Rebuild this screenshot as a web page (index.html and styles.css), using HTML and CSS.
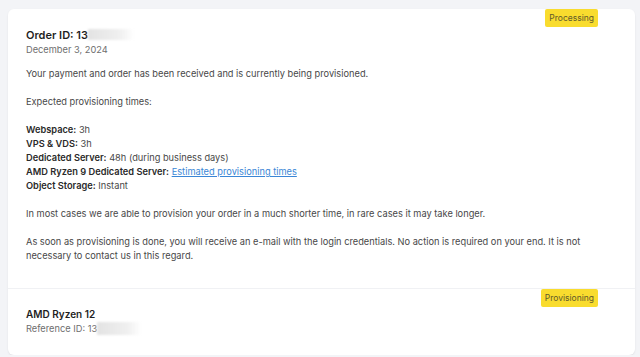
FILE: index.html
```html
<!DOCTYPE html>
<html lang="en">
<head>
<meta charset="utf-8">
<title>Order</title>
<link rel="stylesheet" href="styles.css">
</head>
<body>
<div class="card">
  <section class="section main">
    <span class="badge badge-top">Processing</span>
    <h2 class="title">Order ID: 13<span class="blur"></span></h2>
    <div class="date">December 3, 2024</div>
    <p>Your payment and order has been received and is currently being provisioned.</p>
    <p>Expected provisioning times:</p>
    <p>
      <b>Webspace:</b> 3h<br>
      <b>VPS &amp; VDS:</b> 3h<br>
      <b>Dedicated Server:</b> 48h (during business days)<br>
      <b>AMD Ryzen 9 Dedicated Server:</b> <a href="#">Estimated provisioning times</a><br>
      <b>Object Storage:</b> Instant
    </p>
    <p>In most cases we are able to provision your order in a much shorter time, in rare cases it may take longer.</p>
    <p>As soon as provisioning is done, you will receive an e-mail with the login credentials. No action is required on your end. It is not necessary to contact us in this regard.</p>
  </section>
  <section class="section item">
    <span class="badge badge-top">Provisioning</span>
    <h3 class="title">AMD Ryzen 12</h3>
    <div class="date">Reference ID: 13<span class="blur blur-sm"></span></div>
  </section>
</div>
</body>
</html>
```
FILE: styles.css
```css
* { box-sizing: border-box; }
html, body { margin: 0; padding: 0; }
body {
  background: #f3f4f7;
  font-family: Inter, "Noto Sans", sans-serif;
  font-size: 9.25px;
  line-height: 14px;
  color: #474747;
  padding: 9px 5px 0 8px;
}
.card {
  background: #fff;
  border-radius: 6px;
  box-shadow: 0 1px 2px rgba(0,0,0,0.08);
}
.section {
  position: relative;
  padding: 0 18px;
}
.main {
  padding-top: 18px;
  padding-bottom: 25px;
  border-bottom: 1px solid #f0f1f4;
}
.item {
  padding-top: 17px;
  padding-bottom: 19px;
}
.title {
  margin: 0;
  font-size: 11px;
  line-height: 16px;
  font-weight: 600;
  color: #1f1f1f;
}
.item .title { font-size: 10px; line-height: 16px; }
.date { color: #6e6e6e; }
p { margin: 14px 0 0; }
.date + p { margin-top: 10px; }
b { font-weight: 600; color: #2a2a2a; }
a { color: #3a86d6; text-decoration: underline; }
.badge {
  position: absolute;
  top: 0;
  right: 37px;
  background: #f9dc2e;
  color: #5f5a2a;
  font-size: 8.5px;
  line-height: 18px;
  padding: 0 4px;
  border-radius: 2px;
}
.blur {
  display: inline-block;
  width: 46px;
  height: 11px;
  vertical-align: -1px;
  background: linear-gradient(90deg, #e3e3e3, #f0f0f0 70%, rgba(255,255,255,0));
  filter: blur(1px);
}
.blur-sm { width: 44px; height: 13px; vertical-align: -3px; }
```
